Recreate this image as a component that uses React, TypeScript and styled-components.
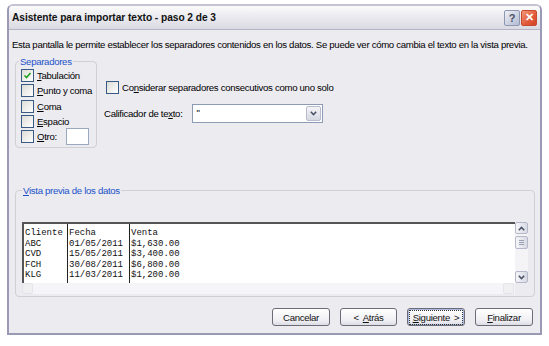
import styled, { createGlobalStyle } from "styled-components"

const GlobalStyle = createGlobalStyle`
  html, body {
    margin: 0;
    background: #ffffff;
  }
  body {
    font-family: "Liberation Sans", Arial, sans-serif;
  }
`

const Page = styled.div`
  padding: 4px 0 0 7px;
`

const Window = styled.div`
  width: 535px;
  height: 331px;
  box-sizing: border-box;
  border: 2px solid #9a9ab4;
  border-top-color: #c4c4d2;
  border-radius: 6px 6px 0 0;
  background: #ecebf0;
  display: flex;
  flex-direction: column;
  overflow: hidden;
`

const TitleBar = styled.div`
  height: 23px;
  flex: none;
  display: flex;
  align-items: center;
  padding: 0 3px 0 3px;
  background: linear-gradient(#fbfbfc, #e6e6ec 60%, #dadae2);
  border-bottom: 1px solid #b4b4c4;
`

const Title = styled.div`
  flex: 1;
  font-size: 10.2px;
  font-weight: bold;
  color: #111;
  letter-spacing: -0.05px;
`

const CaptionButton = styled.div<{ close?: boolean }>`
  width: 14px;
  height: 14px;
  margin-left: 1px;
  border-radius: 2px;
  display: flex;
  align-items: center;
  justify-content: center;
  font-size: 11px;
  font-weight: bold;
  color: ${({ close }) => (close ? "#fff" : "#4a5066")};
  border: 1px solid ${({ close }) => (close ? "#c84a2e" : "#8e96b0")};
  background: ${({ close }) =>
    close
      ? "linear-gradient(135deg, #f29a78, #e1583a 60%, #d04424)"
      : "linear-gradient(135deg, #eef0f6, #b4bcd2)"};
`

const Content = styled.div`
  flex: 1;
  display: flex;
  flex-direction: column;
  padding: 0 6px 0 6px;
  font-size: 9.6px;
  letter-spacing: -0.3px;
  color: #000;
`

const Intro = styled.div`
  margin: 8px 0 0 -3px;
  line-height: 13px;
  white-space: nowrap;
`

const TopRow = styled.div`
  display: flex;
  margin-top: 5px;
`

const Group = styled.fieldset<{ w: number; h: number }>`
  margin: 0;
  width: ${({ w }) => w}px;
  height: ${({ h }) => h}px;
  box-sizing: border-box;
  padding: 1px 3px 0;
  border: 1px solid #cfcfd4;
  border-radius: 4px;
  display: flex;
  flex-direction: column;
`

const Legend = styled.legend`
  padding: 0 1px;
  margin-left: 0;
  line-height: 11px;
  color: #1a52c8;
`

const CheckRow = styled.div`
  height: 15.3px;
  display: flex;
  align-items: center;
  gap: 3px;
  margin-left: 2px;
  white-space: nowrap;
`

const Box = styled.div`
  width: 11px;
  height: 11px;
  border: 1px solid #3a5a86;
  background: linear-gradient(135deg, #dcdcd6, #ffffff);
  flex: none;
  display: flex;
  align-items: center;
  justify-content: center;
`

const U = styled.span`
  text-decoration: underline;
`

const TextField = styled.div<{ w: number }>`
  width: ${({ w }) => w}px;
  height: 17px;
  box-sizing: border-box;
  background: #fff;
  border: 1px solid #9aa8c0;
`

const Options = styled.div`
  margin-left: 7px;
  padding-top: 24px;
  display: flex;
  flex-direction: column;
`

const QualifierRow = styled.div`
  display: flex;
  align-items: center;
  margin-top: 9px;
`

const Select = styled.div`
  width: 131px;
  height: 19px;
  margin-left: 9px;
  box-sizing: border-box;
  background: #fff;
  border: 1px solid #8c9ab4;
  display: flex;
  align-items: stretch;
  padding: 1px;
`

const SelectValue = styled.div`
  flex: 1;
  padding: 1px 0 0 3px;
`

const DropButton = styled.div`
  width: 15px;
  box-sizing: border-box;
  border: 1px solid #b8bccc;
  border-radius: 2px;
  background: linear-gradient(#f4f4f8, #d6d8e2);
  display: flex;
  align-items: center;
  justify-content: center;
`

const PreviewGroup = styled(Group)`
  margin-top: 37px;
  padding: 0 6px 0 6px;
`

const PreviewArea = styled.div`
  margin-top: 26px;
  display: grid;
  grid-template-columns: 493px 13px;
  grid-template-rows: 61px 11px;
`

const Sheet = styled.div`
  background: #fff;
  border-top: 2px solid #555;
  border-left: 2px solid #555;
  display: flex;
  overflow: hidden;
`

const Column = styled.div<{ w: number; last?: boolean }>`
  width: ${({ w }) => w}px;
  flex: ${({ last }) => (last ? 1 : "none")};
  border-right: ${({ last }) => (last ? "none" : "1px solid #222")};
  padding: 4px 0 0 1px;
  font-family: "Liberation Mono", "Courier New", monospace;
  font-size: 9px;
  letter-spacing: 0;
  line-height: 10.5px;
  white-space: pre;
  color: #111;
`

const VScroll = styled.div`
  background: #f4f4f6;
  display: flex;
  flex-direction: column;
  gap: 2px;
`

const ScrollBtn = styled.div<{ faded?: boolean }>`
  height: 12px;
  box-sizing: border-box;
  border: 1px solid ${({ faded }) => (faded ? "#e4e4ea" : "#b4b8c8")};
  border-radius: 2px;
  background: ${({ faded }) =>
    faded ? "#f0f0f2" : "linear-gradient(90deg, #f6f6f9, #d8dae4)"};
  display: flex;
  align-items: center;
  justify-content: center;
  flex: none;
`

const Thumb = styled(ScrollBtn)`
  height: 13px;
  flex-direction: column;
  gap: 1px;
`

const Grip = styled.div`
  width: 5px;
  height: 1px;
  background: #9aa0b4;
`

const Spacer = styled.div`
  flex: 1;
`

const HScroll = styled.div`
  background: #f5f5f7;
  display: flex;
  justify-content: space-between;
  padding: 0 1px 0 0;
`

const HBtn = styled(ScrollBtn)`
  width: 11px;
  height: 11px;
`

const Corner = styled.div`
  background: #ecebf0;
`

const ButtonRow = styled.div`
  display: flex;
  justify-content: flex-end;
  gap: 10px;
  margin-top: 11px;
  padding-right: 1px;
`

const Button = styled.div<{ w: number; focused?: boolean }>`
  width: ${({ w }) => w}px;
  height: 18px;
  box-sizing: border-box;
  border: 1px solid #6c6c78;
  border-radius: 3px;
  background: linear-gradient(#ffffff, #f0f0f4 70%, #dcdce4);
  display: flex;
  align-items: center;
  justify-content: center;
  color: #111;
  box-shadow: ${({ focused }) => (focused ? "inset 0 0 0 1px #a8b8e0" : "none")};
`

const FocusLabel = styled.span`
  outline: 1px dotted #333;
  outline-offset: 1px;
  padding: 0 2px;
`

const Gap = styled.span`
  display: inline-block;
  width: 4px;
`

const Check = () => (
  <svg width="9" height="9" viewBox="0 0 9 9">
    <path d="M1.5 4.5 L3.5 6.5 L7.5 2" fill="none" stroke="#21a121" strokeWidth="1.6" />
  </svg>
)

const Chevron = ({ dir }: { dir: "up" | "down" | "left" | "right" }) => {
  const rot = { up: 180, down: 0, left: 90, right: -90 }[dir]
  return (
    <svg width="7" height="5" viewBox="0 0 7 5" style={{ transform: `rotate(${rot}deg)` }}>
      <path d="M0.8 0.8 L3.5 3.6 L6.2 0.8" fill="none" stroke="#4a5066" strokeWidth="1.5" />
    </svg>
  )
}

const separators = [
  { key: "tab", u: "T", rest: "abulación", checked: true },
  { key: "semi", u: "P", rest: "unto y coma" },
  { key: "comma", u: "C", rest: "oma" },
  { key: "space", u: "E", rest: "spacio" },
]

const preview = {
  cliente: ["Cliente", "ABC", "CVD", "FCH", "KLG"],
  fecha: ["Fecha", "01/05/2011", "15/05/2011", "30/08/2011", "11/03/2011"],
  venta: ["Venta", "$1,630.00", "$3,400.00", "$6,800.00", "$1,200.00"],
}

export default function App() {
  return (
    <Page>
      <GlobalStyle />
      <Window>
        <TitleBar>
          <Title>Asistente para importar texto - paso 2 de 3</Title>
          <CaptionButton>?</CaptionButton>
          <CaptionButton close>✕</CaptionButton>
        </TitleBar>
        <Content>
          <Intro>
            Esta pantalla le permite establecer los separadores contenidos en los datos. Se puede ver cómo cambia el texto en la vista previa.
          </Intro>
          <TopRow>
            <Group w={82} h={92}>
              <Legend>Separadores</Legend>
              {separators.map((s) => (
                <CheckRow key={s.key}>
                  <Box>{s.checked && <Check />}</Box>
                  <span>
                    <U>{s.u}</U>
                    {s.rest}
                  </span>
                </CheckRow>
              ))}
              <CheckRow>
                <Box />
                <span>
                  <U>O</U>tro:
                </span>
                <TextField w={23} style={{ marginLeft: 6 }} />
              </CheckRow>
            </Group>
            <Options>
              <CheckRow>
                <Box />
                <span>
                  Co<U>n</U>siderar separadores consecutivos como uno solo
                </span>
              </CheckRow>
              <QualifierRow>
                <span>
                  Calificador de te<U>x</U>to:
                </span>
                <Select>
                  <SelectValue>"</SelectValue>
                  <DropButton>
                    <Chevron dir="down" />
                  </DropButton>
                </Select>
              </QualifierRow>
            </Options>
          </TopRow>
          <PreviewGroup w={519} h={112}>
            <Legend>
              <U>V</U>ista previa de los datos
            </Legend>
            <PreviewArea>
              <Sheet>
                <Column w={42}>{preview.cliente.join("\n")}</Column>
                <Column w={60}>{preview.fecha.join("\n")}</Column>
                <Column w={0} last>
                  {preview.venta.join("\n")}
                </Column>
              </Sheet>
              <VScroll>
                <ScrollBtn>
                  <Chevron dir="up" />
                </ScrollBtn>
                <Thumb>
                  <Grip />
                  <Grip />
                  <Grip />
                </Thumb>
                <Spacer />
                <ScrollBtn>
                  <Chevron dir="down" />
                </ScrollBtn>
              </VScroll>
              <HScroll>
                <HBtn faded />
                <HBtn faded />
              </HScroll>
              <Corner />
            </PreviewArea>
          </PreviewGroup>
          <ButtonRow>
            <Button w={58}>Cancelar</Button>
            <Button w={57}>
              &lt;<Gap />
              <U>A</U>trás
            </Button>
            <Button w={58} focused>
              <FocusLabel>
                <U>S</U>iguiente<Gap />&gt;
              </FocusLabel>
            </Button>
            <Button w={58}>
              <U>F</U>inalizar
            </Button>
          </ButtonRow>
        </Content>
      </Window>
    </Page>
  )
}
